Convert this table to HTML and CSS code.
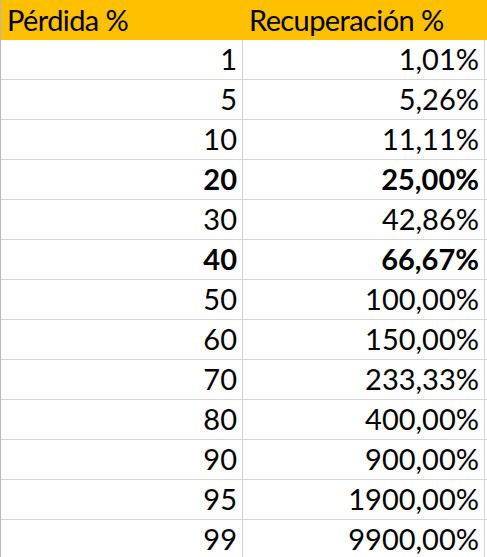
FILE: index.html
```html
<!DOCTYPE html>
<html lang="es">
<head>
<meta charset="utf-8">
<link rel="stylesheet" href="styles.css">
</head>
<body>
<div class="sheet">
  <div class="cell head">Pérdida %</div><div class="cell head">Recuperación %</div><div class="cell head"></div>
  <div class="cell num">1</div><div class="cell num">1,01%</div><div class="cell num"></div>
  <div class="cell num">5</div><div class="cell num">5,26%</div><div class="cell num"></div>
  <div class="cell num">10</div><div class="cell num">11,11%</div><div class="cell num"></div>
  <div class="cell num bold">20</div><div class="cell num bold">25,00%</div><div class="cell num"></div>
  <div class="cell num">30</div><div class="cell num">42,86%</div><div class="cell num"></div>
  <div class="cell num bold">40</div><div class="cell num bold">66,67%</div><div class="cell num"></div>
  <div class="cell num">50</div><div class="cell num">100,00%</div><div class="cell num"></div>
  <div class="cell num">60</div><div class="cell num">150,00%</div><div class="cell num"></div>
  <div class="cell num">70</div><div class="cell num">233,33%</div><div class="cell num"></div>
  <div class="cell num">80</div><div class="cell num">400,00%</div><div class="cell num"></div>
  <div class="cell num">90</div><div class="cell num">900,00%</div><div class="cell num"></div>
  <div class="cell num">95</div><div class="cell num">1900,00%</div><div class="cell num"></div>
  <div class="cell num">99</div><div class="cell num">9900,00%</div><div class="cell num"></div>
</div>
</body>
</html>
```
FILE: styles.css
```css
html, body {
  margin: 0;
  padding: 0;
  background: #ffffff;
}
.sheet {
  display: grid;
  grid-template-columns: 242px 242px 1fr;
  grid-auto-rows: 40px;
  border-left: 1px solid #b8b8b8;
  font-family: Lato, "Liberation Sans", sans-serif;
  font-size: 29px;
  color: #000;
}
.cell {
  box-sizing: border-box;
  display: flex;
  align-items: flex-end;
  padding-bottom: 3px;
  line-height: 34px;
  white-space: nowrap;
  overflow: hidden;
}
.head {
  background: #ffc000;
  padding-left: 6px;
  letter-spacing: -0.6px;
}
.num {
  justify-content: flex-end;
  padding-right: 5px;
  border-bottom: 1px solid #d4d4d4;
  border-right: 1px solid #d4d4d4;
}
.num:nth-child(3n) {
  border-right: none;
}
.bold {
  font-weight: 700;
}
```
